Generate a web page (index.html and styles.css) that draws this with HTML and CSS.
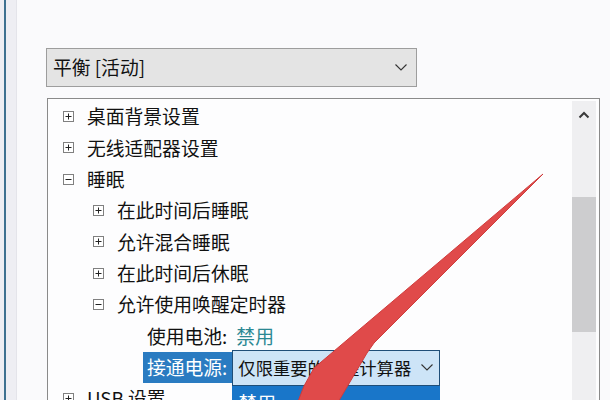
FILE: index.html
```html
<!DOCTYPE html>
<html lang="zh-CN">
<head>
<meta charset="utf-8">
<title>电源选项 - 高级设置</title>
<link rel="stylesheet" href="styles.css">
</head>
<body>
<div class="window">
  <div class="side"><div class="side-line"></div></div>
  <div class="main">
    <div class="plan-select">
      <span class="plan-text">平衡 [活动]</span>
      <svg class="chev" width="12" height="7" viewBox="0 0 12 7"><path d="M0.5 0.5L6 6L11.5 0.5" fill="none" stroke="#333" stroke-width="1.1"/></svg>
    </div>
    <div class="tree-box">
      <div class="tree">
        <div class="row lv0">
          <svg class="exp" width="11" height="11" viewBox="0 0 11 11"><rect x="0.5" y="0.5" width="10" height="10" fill="#fff" stroke="#808080"/><path d="M2.5 5.5h6M5.5 2.5v6" stroke="#222"/></svg>
          <span class="label">桌面背景设置</span>
        </div>
        <div class="row lv0">
          <svg class="exp" width="11" height="11" viewBox="0 0 11 11"><rect x="0.5" y="0.5" width="10" height="10" fill="#fff" stroke="#808080"/><path d="M2.5 5.5h6M5.5 2.5v6" stroke="#222"/></svg>
          <span class="label">无线适配器设置</span>
        </div>
        <div class="row lv0">
          <svg class="exp" width="11" height="11" viewBox="0 0 11 11"><rect x="0.5" y="0.5" width="10" height="10" fill="#fff" stroke="#808080"/><path d="M2.5 5.5h6" stroke="#222"/></svg>
          <span class="label">睡眠</span>
        </div>
        <div class="row lv1">
          <svg class="exp" width="11" height="11" viewBox="0 0 11 11"><rect x="0.5" y="0.5" width="10" height="10" fill="#fff" stroke="#808080"/><path d="M2.5 5.5h6M5.5 2.5v6" stroke="#222"/></svg>
          <span class="label">在此时间后睡眠</span>
        </div>
        <div class="row lv1">
          <svg class="exp" width="11" height="11" viewBox="0 0 11 11"><rect x="0.5" y="0.5" width="10" height="10" fill="#fff" stroke="#808080"/><path d="M2.5 5.5h6M5.5 2.5v6" stroke="#222"/></svg>
          <span class="label">允许混合睡眠</span>
        </div>
        <div class="row lv1">
          <svg class="exp" width="11" height="11" viewBox="0 0 11 11"><rect x="0.5" y="0.5" width="10" height="10" fill="#fff" stroke="#808080"/><path d="M2.5 5.5h6M5.5 2.5v6" stroke="#222"/></svg>
          <span class="label">在此时间后休眠</span>
        </div>
        <div class="row lv1">
          <svg class="exp" width="11" height="11" viewBox="0 0 11 11"><rect x="0.5" y="0.5" width="10" height="10" fill="#fff" stroke="#808080"/><path d="M2.5 5.5h6" stroke="#222"/></svg>
          <span class="label">允许使用唤醒定时器</span>
        </div>
        <div class="row lv2">
          <span class="setting">使用电池:</span><span class="value">禁用</span>
        </div>
        <div class="row lv2">
          <span class="setting selected">接通电源:</span>
          <div class="combo">
            <span class="combo-text">仅限重要的唤醒计算器</span>
            <svg class="chev" width="12" height="7" viewBox="0 0 12 7"><path d="M0.5 0.5L6 6L11.5 0.5" fill="none" stroke="#333" stroke-width="1.1"/></svg>
            <div class="combo-list">
              <div class="combo-item">禁用</div>
            </div>
          </div>
        </div>
        <div class="row lv0">
          <svg class="exp" width="11" height="11" viewBox="0 0 11 11"><rect x="0.5" y="0.5" width="10" height="10" fill="#fff" stroke="#808080"/><path d="M2.5 5.5h6M5.5 2.5v6" stroke="#222"/></svg>
          <span class="label">USB 设置</span>
        </div>
      </div>
      <div class="scrollbar">
        <div class="sb-up">
          <svg width="12" height="8" viewBox="0 0 12 8"><path d="M1.5 6.5L6 2L10.5 6.5" fill="none" stroke="#3a3a3a" stroke-width="2"/></svg>
        </div>
        <div class="sb-thumb"></div>
      </div>
    </div>
  </div>
</div>
<svg class="annot-arrow" width="610" height="400" viewBox="0 0 610 400">
  <polygon points="543,174 374,343 367,353 337,404 297,404 304,386 314,368" fill="#e04a4a" stroke="#cf3c3c" stroke-width="1" stroke-linejoin="round"/>
</svg>
</body>
</html>
```

FILE: styles.css
```css
html, body {
  margin: 0;
  padding: 0;
  width: 610px;
  height: 400px;
  overflow: hidden;
  background: #fafafc;
  font-family: "Noto Sans CJK SC", "Noto Sans", sans-serif;
  color: #111;
}

.window {
  display: flex;
  height: 400px;
  position: relative;
}

.side {
  width: 17px;
  flex: none;
  background: #eeeef3;
  border-right: 1px solid #e4e4ea;
  box-sizing: border-box;
  padding-left: 4px;
}

.side-line {
  width: 2px;
  height: 100%;
  background: #3e7190;
}

.main {
  flex: 1;
  padding: 48px 0 0 29px;
}

.plan-select {
  width: 371px;
  height: 39px;
  box-sizing: border-box;
  border: 1px solid #9d9d9d;
  background: #e4e4e4;
  display: flex;
  align-items: center;
  justify-content: space-between;
  padding: 0 9px 0 6px;
}

.plan-text {
  font-size: 18.8px;
  line-height: 1;
  color: #111;
}

.tree-box {
  margin: 11px 0 0 1px;
  width: 553px;
  height: 330px;
  box-sizing: border-box;
  border: 1px solid #8a8a8a;
  border-bottom: none;
  background: #fdfdfe;
  display: flex;
}

.tree {
  flex: 1;
  padding-top: 2px;
}

.row {
  height: 31.33px;
  display: flex;
  align-items: center;
  font-size: 18.8px;
  line-height: 1;
}

.lv0 { padding-left: 15px; }
.lv1 { padding-left: 45px; }
.lv2 { padding-left: 95px; }

.exp {
  flex: none;
  margin-right: 13px;
}

.label {
  white-space: nowrap;
}

.setting {
  padding: 0 6px 0 4px;
  white-space: nowrap;
  height: 31px;
  display: flex;
  align-items: center;
}

.selected {
  background: #2a7bc1;
  color: #fff;
}

.value {
  margin-left: 3px;
  color: #2b8893;
}

.combo {
  position: relative;
  width: 208px;
  height: 36px;
  box-sizing: border-box;
  border: 1px solid #1f4e78;
  background: #cde4f7;
  display: flex;
  align-items: center;
  justify-content: space-between;
  padding: 0 6px 0 5px;
  margin-left: -1px;
  margin-top: 1px;
}

.combo-text {
  font-size: 17.3px;
  line-height: 1;
  white-space: nowrap;
}

.combo-list {
  position: absolute;
  left: -1px;
  top: 35px;
  width: 208px;
  background: #1976c9;
  z-index: 2;
}

.combo-item {
  height: 31px;
  display: flex;
  align-items: center;
  padding-left: 6px;
  font-size: 18.8px;
  color: #fff;
  padding-top: 2px;
}

.scrollbar {
  width: 24px;
  flex: none;
  margin: 2px 3px 0 0;
  background: #efeff1;
  display: flex;
  flex-direction: column;
}

.sb-up {
  height: 28px;
  display: flex;
  align-items: center;
  justify-content: center;
  padding-bottom: 2px;
}

.sb-thumb {
  margin-top: 66px;
  height: 135px;
  background: #cdcdcf;
}

.annot-arrow {
  position: absolute;
  left: 0;
  top: 0;
  z-index: 5;
  pointer-events: none;
}
```
